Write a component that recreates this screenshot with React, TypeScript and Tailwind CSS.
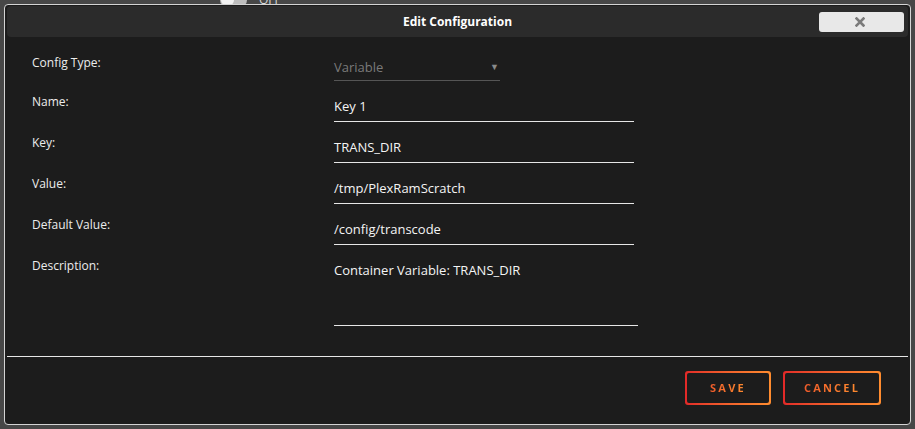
const rows = [
  { label: "Name:", value: "Key 1" },
  { label: "Key:", value: "TRANS_DIR" },
  { label: "Value:", value: "/tmp/PlexRamScratch" },
  { label: "Default Value:", value: "/config/transcode" },
];

function Field({ label, value }: { label: string; value: string }) {
  return (
    <div className="flex h-[41px]">
      <div className="w-[302px] pt-[1px] text-[12px] leading-[16px] text-[#ececec]">{label}</div>
      <div className="w-[300px] pt-[5px]">
        <div className="h-[24px] border-b border-[#e6e6e6] text-[13px] leading-[16px] text-[#f4f4f4]">{value}</div>
      </div>
    </div>
  );
}

function GradientButton({ label, width }: { label: string; width: string }) {
  return (
    <div className={`${width} h-[34px] rounded-[3px] bg-linear-to-r from-[#e22828] to-[#ff8c2f] p-[2px]`}>
      <div className="flex h-full w-full items-center justify-center rounded-[2px] bg-[#1c1c1c]">
        <span className="bg-linear-to-r from-[#ee5a2a] to-[#ff8c2f] bg-clip-text text-[11px] font-bold tracking-[2.2px] text-transparent">
          {label}
        </span>
      </div>
    </div>
  );
}

export default function App() {
  return (
    <div
      className="relative h-[429px] w-[915px] overflow-hidden bg-[#474747] p-[4px]"
      style={{ fontFamily: '"Open Sans", "Noto Sans", sans-serif' }}
    >
      {/* page behind the dialog, mostly hidden */}
      <div className="absolute left-[220px] top-[-9px] flex items-center gap-[12px]">
        <div className="flex h-[14px] w-[27px] items-center rounded-full bg-[#bdbdbd] px-[1px]">
          <div className="h-[12px] w-[13px] rounded-full bg-[#f2f2f2]" />
        </div>
        <span className="text-[12px] text-[#d8d8d8]">OFF</span>
      </div>

      <div className="relative flex h-[421px] w-[907px] flex-col rounded-[4px] border border-[#d4d4d4] bg-[#1c1c1c] px-[2px] pt-[1px]">
        <header className="relative flex h-[31px] items-center justify-center rounded-[4px] bg-[#2b2b2b]">
          <h1 className="pt-[1px] text-[12px] font-bold text-white">Edit Configuration</h1>
          <button className="absolute right-[4px] top-[6px] flex h-[20px] w-[85px] items-center justify-center rounded-[3px] bg-[#e8e8e8]">
            <svg width="10" height="10" viewBox="0 0 10 10" className="-ml-[3px]">
              <path d="M1.5 1.5L8.5 8.5M8.5 1.5L1.5 8.5" stroke="#7a7a7a" strokeWidth="2.6" strokeLinecap="square" />
            </svg>
          </button>
        </header>

        <main className="flex flex-col px-[25px] pt-[17px]">
          <div className="flex h-[39px]">
            <div className="w-[302px] pt-[1px] text-[12px] leading-[16px] text-[#ececec]">Config Type:</div>
            <div className="w-[166px] pt-[5px]">
              <div className="flex h-[22px] justify-between border-b border-[#555555] text-[13px] leading-[16px] text-[#7a7a7a]">
                <span>Variable</span>
                <span className="pr-[1px] text-[9px] leading-[16px] text-[#8a8a8a]">▼</span>
              </div>
            </div>
          </div>
          {rows.map((r) => (
            <Field key={r.label} label={r.label} value={r.value} />
          ))}
          <div className="flex h-[76px]">
            <div className="w-[302px] pt-[1px] text-[12px] leading-[16px] text-[#ececec]">Description:</div>
            <div className="w-[304px] pt-[5px]">
              <div className="h-[64px] border-b border-[#e6e6e6] text-[13px] leading-[16px] text-[#f4f4f4]">
                Container Variable: TRANS_DIR
              </div>
            </div>
          </div>
        </main>

        <div className="mt-auto border-t border-[#e6e6e6]">
          <div className="flex justify-end gap-[12px] pr-[27px] pb-[19px] pt-[14px]">
            <GradientButton label="SAVE" width="w-[86px]" />
            <GradientButton label="CANCEL" width="w-[98px]" />
          </div>
        </div>
      </div>
    </div>
  );
}
